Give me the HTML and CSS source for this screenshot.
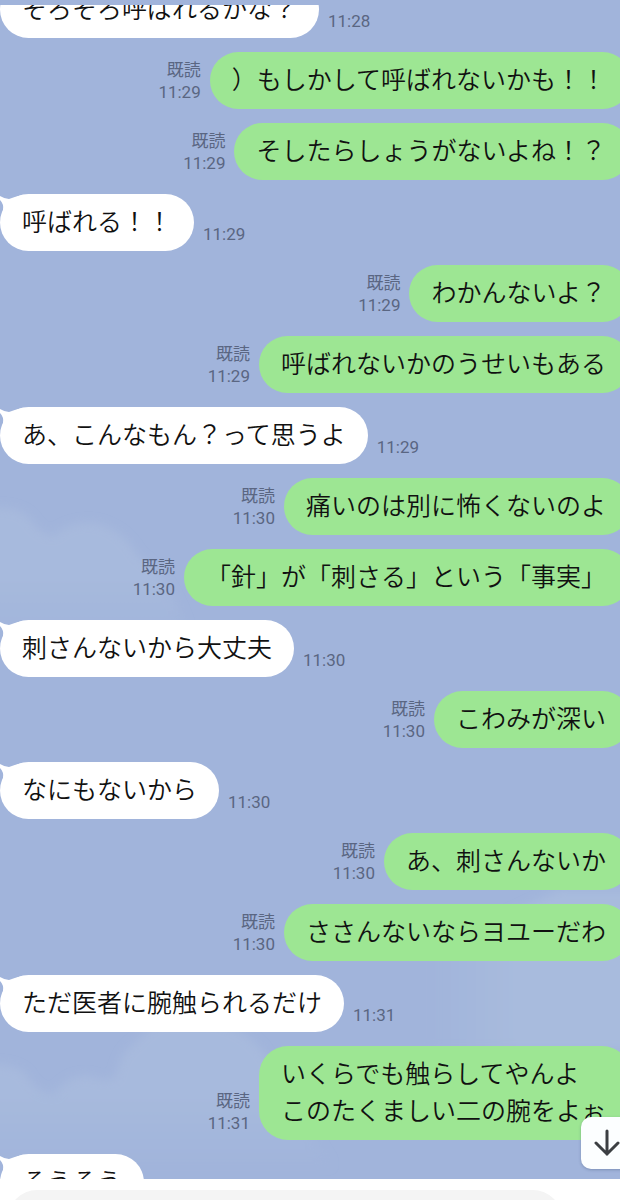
FILE: index.html
```html
<!DOCTYPE html>
<html lang="ja">
<head>
  <meta charset="UTF-8">
  <meta name="viewport" content="width=device-width, initial-scale=1">
  <title>トーク</title>
  <link rel="stylesheet" href="styles.css">
</head>
<body>

  <main class="chat">
    <svg class="sky" viewBox="0 0 620 1200" preserveAspectRatio="xMinYMin slice" aria-hidden="true">
      <defs>
        <linearGradient id="cloud" x1="0" y1="0" x2="0" y2="1">
          <stop offset="0" stop-color="#a7badd"/>
          <stop offset="0.5" stop-color="#a7badd"/>
          <stop offset="1" stop-color="#a1b4db"/>
        </linearGradient>
        <linearGradient id="haze" x1="0" y1="0" x2="1" y2="0">
          <stop offset="0" stop-color="#a1b4db"/>
          <stop offset="0.4" stop-color="#a8bbdd"/>
          <stop offset="1" stop-color="#a8bbdd"/>
        </linearGradient>
        <filter id="soft"><feGaussianBlur stdDeviation="5"/></filter>
      </defs>
      <g filter="url(#soft)">
        <path fill="url(#cloud)" d="M-20 510 Q12 502 30 518 Q36 530 52 536 Q72 520 96 523 Q124 530 138 556 Q170 575 190 640 H-20Z"/>
        <path fill="url(#cloud)" d="M-20 1066 Q10 1060 26 1074 Q34 1092 54 1094 Q70 1074 90 1076 Q106 1084 116 1076 Q120 1052 136 1042 Q160 1012 200 1020 Q240 1024 262 1050 L330 1165 H-20Z"/>
        <path fill="url(#haze)" d="M432 1050 V950 L560 890 H650 V1050Z"/>
      </g>
    </svg>

    <ol class="messages">
      <li class="message received">
        <p class="bubble">そろそろ呼ばれるかな？</p>
        <div class="meta"><time>11:28</time></div>
      </li>
      <li class="message sent">
        <p class="bubble">）もしかして呼ばれないかも！！</p>
        <div class="meta"><span>既読</span><time>11:29</time></div>
      </li>
      <li class="message sent">
        <p class="bubble">そしたらしょうがないよね！？</p>
        <div class="meta"><span>既読</span><time>11:29</time></div>
      </li>
      <li class="message received">
        <p class="bubble">呼ばれる！！</p>
        <svg class="tail" viewBox="0 0 24 18" aria-hidden="true"><path d="M0 2 Q5 5 9 5 Q14 3 22 1 V16 H3 Q4 10 0 6Z"/></svg>
        <div class="meta"><time>11:29</time></div>
      </li>
      <li class="message sent">
        <p class="bubble">わかんないよ？</p>
        <div class="meta"><span>既読</span><time>11:29</time></div>
      </li>
      <li class="message sent">
        <p class="bubble">呼ばれないかのうせいもある</p>
        <div class="meta"><span>既読</span><time>11:29</time></div>
      </li>
      <li class="message received">
        <p class="bubble">あ、こんなもん？って思うよ</p>
        <svg class="tail" viewBox="0 0 24 18" aria-hidden="true"><path d="M0 2 Q5 5 9 5 Q14 3 22 1 V16 H3 Q4 10 0 6Z"/></svg>
        <div class="meta"><time>11:29</time></div>
      </li>
      <li class="message sent">
        <p class="bubble">痛いのは別に怖くないのよ</p>
        <div class="meta"><span>既読</span><time>11:30</time></div>
      </li>
      <li class="message sent">
        <p class="bubble">「針」が「刺さる」という「事実」</p>
        <div class="meta"><span>既読</span><time>11:30</time></div>
      </li>
      <li class="message received">
        <p class="bubble">刺さんないから大丈夫</p>
        <svg class="tail" viewBox="0 0 24 18" aria-hidden="true"><path d="M0 2 Q5 5 9 5 Q14 3 22 1 V16 H3 Q4 10 0 6Z"/></svg>
        <div class="meta"><time>11:30</time></div>
      </li>
      <li class="message sent">
        <p class="bubble">こわみが深い</p>
        <div class="meta"><span>既読</span><time>11:30</time></div>
      </li>
      <li class="message received">
        <p class="bubble">なにもないから</p>
        <svg class="tail" viewBox="0 0 24 18" aria-hidden="true"><path d="M0 2 Q5 5 9 5 Q14 3 22 1 V16 H3 Q4 10 0 6Z"/></svg>
        <div class="meta"><time>11:30</time></div>
      </li>
      <li class="message sent">
        <p class="bubble">あ、刺さんないか</p>
        <div class="meta"><span>既読</span><time>11:30</time></div>
      </li>
      <li class="message sent">
        <p class="bubble">ささんないならヨユーだわ</p>
        <div class="meta"><span>既読</span><time>11:30</time></div>
      </li>
      <li class="message received">
        <p class="bubble">ただ医者に腕触られるだけ</p>
        <svg class="tail" viewBox="0 0 24 18" aria-hidden="true"><path d="M0 2 Q5 5 9 5 Q14 3 22 1 V16 H3 Q4 10 0 6Z"/></svg>
        <div class="meta"><time>11:31</time></div>
      </li>
      <li class="message sent">
        <p class="bubble">いくらでも触らしてやんよ<br>このたくましい二の腕をよぉ</p>
        <div class="meta"><span>既読</span><time>11:31</time></div>
      </li>
      <li class="message received">
        <p class="bubble">そうそう</p>
        <svg class="tail" viewBox="0 0 24 18" aria-hidden="true"><path d="M0 2 Q5 5 9 5 Q14 3 22 1 V16 H3 Q4 10 0 6Z"/></svg>
      </li>
    </ol>

    <button class="scroll-down" type="button" aria-label="最新のメッセージへ">
      <svg viewBox="0 0 28 28" aria-hidden="true"><path d="M14 2V25M3 14L14 25L25 14"/></svg>
    </button>
  </main>

  <footer class="composer">
    <input type="text" aria-label="メッセージを入力">
  </footer>

</body>
</html>
```
FILE: styles.css
```css
* {
  box-sizing: border-box;
}
body {
  display: flex;
  flex-direction: column;
  height: 100vh;
  margin: 0;
  overflow: hidden;
  background: #a1b4db;
  color: #111;
  font-family: "Noto Sans CJK JP", sans-serif;
}

/* chat area */
.chat {
  position: relative;
  flex: 1;
  min-height: 0;
  margin-top: 5px;
  overflow: hidden;
}
.sky {
  position: absolute;
  top: -5px;
  left: 0;
  width: 100%;
}
.messages {
  position: relative;
  display: flex;
  flex-direction: column;
  gap: 14px;
  margin: -24px -11px 0 0;
  padding: 0;
  list-style: none;
}
.message {
  position: relative;
  display: flex;
  align-items: flex-end;
  gap: 9px;
}
.sent {
  flex-direction: row-reverse;
}
.bubble {
  margin: 0;
  padding: 8px 22px 12px;
  border-radius: 29px;
  background: #fff;
  font-size: 25px;
  font-weight: 350;
  line-height: 37px;
  white-space: nowrap;
  text-spacing-trim: space-all;
}
.sent .bubble {
  padding-right: 25px;
  background: #9de693;
}
.tail {
  position: absolute;
  top: 0;
  left: 0;
  width: 24px;
  height: 18px;
  fill: #fff;
}
.meta {
  display: flex;
  flex-direction: column;
  padding-bottom: 6px;
  color: #5a6682;
  font-family: Roboto, "Noto Sans CJK JP", sans-serif;
  font-size: 17px;
  line-height: 22px;
}
.sent .meta {
  align-items: flex-end;
}

/* jump to latest */
.scroll-down {
  position: absolute;
  right: -13px;
  bottom: 10px;
  width: 52px;
  height: 52px;
  padding: 12px;
  border: none;
  border-radius: 10px;
  background: #fcfeff;
  box-shadow: 0 1px 3px rgba(40, 60, 100, 0.3);
}
.scroll-down svg {
  display: block;
  width: 28px;
  height: 28px;
  fill: none;
  stroke: #3c3f43;
  stroke-width: 3;
  stroke-linecap: round;
}

/* message input */
.composer {
  flex: 0 0 21px;
  padding: 11px 58px 0 8px;
  overflow: hidden;
  background: #fff;
}
.composer input {
  width: 100%;
  height: 58px;
  padding: 0 24px;
  border: none;
  border-radius: 29px;
  background: #f4f4f4;
  font-size: 25px;
}
```
